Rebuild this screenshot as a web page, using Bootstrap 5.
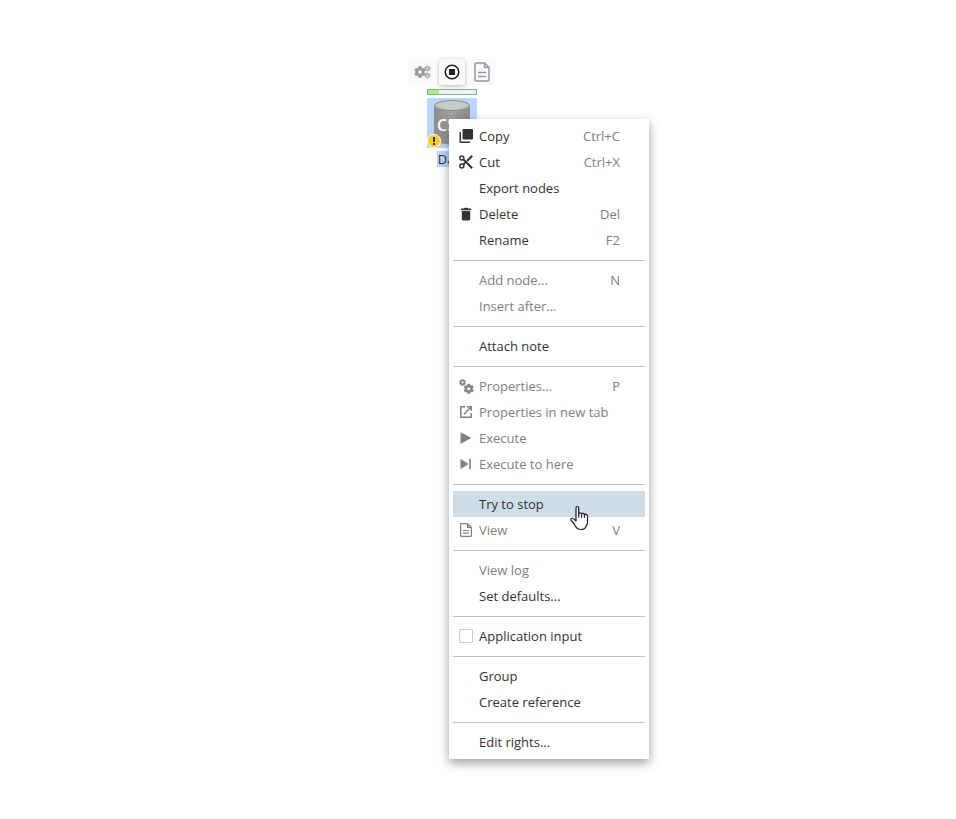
<!DOCTYPE html>
<html lang="en">
<head>
<meta charset="utf-8">
<meta name="viewport" content="width=device-width, initial-scale=1">
<title>Workflow canvas</title>
<link rel="stylesheet" href="https://cdn.jsdelivr.net/npm/bootstrap@5.3.0/dist/css/bootstrap.min.css">
<style>
body { font-family: "Open Sans", sans-serif; font-size: 13px; line-height: 16px; color: #333; background: #fff; }
/* free canvas: the node, the menu and the pointer have their own places */
.flow-node { left: 409px; top: 59px; }
.tool { width: 26px; height: 26px; background: #fafafe; color: #999; border-radius: 2px; }
.tool.on { color: #222; background: #f8f8fd; box-shadow: 0 1px 4px rgba(0,0,0,.32); }
.run-bar { width: 50px; height: 6px; margin-top: 4px; border: 1px solid #76b98a; border-radius: 0; background: #eef2f6; }
.run-bar .progress-bar { background: #b4ea84; }
.node-art { width: 50px; height: 50px; margin-top: 3px; background: #bad6ff; }
.node-warn { left: 0; bottom: 0; }
.node-label { margin-top: 3px; padding: 0 1px; background: #bad6ff; }
.ctx-menu { left: 449px; top: 119px; width: 200px; padding: 4px; background: #fff; box-shadow: 0 4px 10px rgba(0,0,0,.38); }
.ctx-item { height: 26px; padding: 0 25px 0 6px; color: #333; background: none; text-align: left; }
.ctx-item:disabled { color: #808080; }
.ctx-item.hover { background: #cfdde9; }
.ctx-item kbd { font: inherit; color: #808080; background: none; padding: 0; }
.slot { width: 14px; height: 14px; margin-right: 6px; }
.ctx-item .form-check-input { border: 1px solid #ccc; border-radius: 1px; margin: 0 6px 0 0; width: 14px; height: 14px; }
.ctx-rule { margin: 7px 0 6px; border-top: 1px solid #c4c4c4; opacity: 1; }
.pointer { left: 570px; top: 505px; pointer-events: none; }
svg { display: block; flex: none; }
</style>
<script src="https://cdn.jsdelivr.net/npm/bootstrap@5.3.0/dist/js/bootstrap.bundle.min.js"></script>
</head>
<body>
<svg width="0" height="0" class="position-absolute" aria-hidden="true">
  <symbol id="gear" viewBox="1.500 1.500 21 21"><path fill="currentColor" stroke="currentColor" stroke-width="1" d="M19.14 12.94c.04-.3.06-.61.06-.94 0-.32-.02-.64-.07-.94l2.03-1.58c.18-.14.23-.41.12-.61l-1.92-3.32c-.12-.22-.37-.29-.59-.22l-2.39.96c-.5-.38-1.03-.7-1.62-.94l-.36-2.54c-.04-.24-.24-.41-.48-.41h-3.84c-.24 0-.43.17-.47.41l-.36 2.54c-.59.24-1.13.57-1.62.94l-2.39-.96c-.22-.08-.47 0-.59.22L2.74 8.87c-.12.21-.08.47.12.61l2.03 1.58c-.05.3-.09.63-.09.94s.02.64.07.94l-2.03 1.58c-.18.14-.23.41-.12.61l1.92 3.32c.12.22.37.29.59.22l2.39-.96c.5.38 1.03.7 1.62.94l.36 2.54c.05.24.24.41.48.41h3.84c.24 0 .44-.17.47-.41l.36-2.54c.59-.24 1.13-.56 1.62-.94l2.39.96c.22.08.47 0 .59-.22l1.92-3.32c.12-.22.07-.47-.12-.61l-2.01-1.58zM12 15.6c-1.98 0-3.6-1.62-3.6-3.6s1.62-3.6 3.6-3.6 3.6 1.62 3.6 3.6-1.62 3.6-3.6 3.6z"/></symbol>
  <symbol id="doc" viewBox="0 0 16 20"><path fill="none" stroke="currentColor" stroke-width="1.500" stroke-linejoin="round" d="M1 2.200Q1 1 2.200 1H10.500L15 5.500V17.800Q15 19 13.800 19H2.200Q1 19 1 17.800ZM10.500 1V5.500H15M4 10.500H12M4 14.500H12"/></symbol>
</svg>

<main class="position-relative min-vh-100 overflow-hidden">
  <section class="flow-node position-absolute d-flex flex-column align-items-center" aria-label="Data node">
    <div class="d-flex gap-1">
      <button type="button" class="tool btn border-0 p-0 d-flex align-items-center justify-content-center" aria-label="Properties">
        <svg width="18" height="18" viewBox="0 0 18 18"><use href="#gear" x="1" y="3" width="12" height="12"/><g fill="none" stroke="currentColor"><circle cx="14.500" cy="5.500" r="1.700" stroke-width="1.300"/><circle cx="14.500" cy="12.500" r="1.700" stroke-width="1.300"/><circle cx="14.500" cy="5.500" r="2.600" stroke-width=".9" stroke-dasharray="1.300 1.420"/><circle cx="14.500" cy="12.500" r="2.600" stroke-width=".9" stroke-dasharray="1.300 1.420"/></g></svg>
      </button>
      <button type="button" class="tool on btn border-0 p-0 d-flex align-items-center justify-content-center" aria-label="Stop">
        <svg width="16" height="16" viewBox="0 0 16 16"><circle cx="8" cy="8" r="6.800" fill="none" stroke="currentColor" stroke-width="1.500"/><path fill="currentColor" d="M5 5h6v6H5z"/></svg>
      </button>
      <button type="button" class="tool btn border-0 p-0 d-flex align-items-center justify-content-center" aria-label="View"><svg width="16" height="20"><use href="#doc"/></svg></button>
    </div>
    <div class="run-bar progress" role="progressbar" aria-label="Execution" aria-valuenow="22" aria-valuemin="0" aria-valuemax="100"><div class="progress-bar" style="width:22%"></div></div>
    <div class="node-art position-relative">
      <svg width="50" height="50" viewBox="0 0 50 50"><defs><linearGradient id="side"><stop offset="0" stop-color="#8c8c8c"/><stop offset=".5" stop-color="#a0a0a0"/><stop offset="1" stop-color="#8c8c8c"/></linearGradient></defs>
        <path fill="url(#side)" d="M7 7v34c0 3 8 5.500 18 5.500S43 44 43 41V7z"/><ellipse cx="25" cy="7.500" rx="17.500" ry="5" fill="#c8c8c8" stroke="#8c8c8c"/>
        <text x="10" y="33" font-size="16" font-weight="600" fill="#fff">CSV</text></svg>
      <svg class="node-warn position-absolute" width="14" height="14" viewBox="0 0 14 14"><circle cx="7" cy="7" r="6.500" fill="#fc1" stroke="#fff"/><path fill="#333" d="M6 3h2v5H6zM6 9h2v2H6z"/></svg>
    </div>
    <div class="node-label">Data</div>
  </section>

  <div class="ctx-menu position-absolute d-flex flex-column" role="menu">
    <button type="button" class="ctx-item border-0 d-flex align-items-center"><svg class="slot" viewBox="0 0 14 14"><path fill="currentColor" d="M4.500 0h8.500q1 0 1 1v8.500q0 1-1 1H4.500q-1 0-1-1V1q0-1 1-1zM.5 3H2v9.500h9V14H1.500q-1 0-1-1z"/></svg><span>Copy</span><kbd class="ms-auto">Ctrl+C</kbd></button>
    <button type="button" class="ctx-item border-0 d-flex align-items-center"><svg class="slot" viewBox="0 0 14 14"><g fill="none" stroke="currentColor"><circle cx="2.800" cy="2.900" r="2" stroke-width="1.500"/><circle cx="2.800" cy="11.100" r="2" stroke-width="1.500"/><path stroke-width="2" d="M4.200 4.300 13.200 13.300M4.200 9.700 6.500 7.400M8 6l5.200-5.200"/></g></svg><span>Cut</span><kbd class="ms-auto">Ctrl+X</kbd></button>
    <button type="button" class="ctx-item border-0 d-flex align-items-center"><span class="slot"></span><span>Export nodes</span></button>
    <button type="button" class="ctx-item border-0 d-flex align-items-center"><svg class="slot" viewBox="0 0 14 14"><path fill="currentColor" d="M2 1.500h3l.7-.7h2.600l.7.700h3V3H2zM2.800 3.700h8.400v8.300q0 1.500-1.500 1.500H4.300q-1.500 0-1.500-1.500z"/></svg><span>Delete</span><kbd class="ms-auto">Del</kbd></button>
    <button type="button" class="ctx-item border-0 d-flex align-items-center"><span class="slot"></span><span>Rename</span><kbd class="ms-auto">F2</kbd></button>
    <hr class="ctx-rule">
    <button type="button" disabled class="ctx-item border-0 d-flex align-items-center"><span class="slot"></span><span>Add node...</span><kbd class="ms-auto">N</kbd></button>
    <button type="button" disabled class="ctx-item border-0 d-flex align-items-center"><span class="slot"></span><span>Insert after...</span></button>
    <hr class="ctx-rule">
    <button type="button" class="ctx-item border-0 d-flex align-items-center"><span class="slot"></span><span>Attach note</span></button>
    <hr class="ctx-rule">
    <button type="button" disabled class="ctx-item border-0 d-flex align-items-center"><svg class="slot overflow-visible" viewBox="0 0 14 14"><use href="#gear" x="0" y="0" width="7" height="7"/><use href="#gear" x="4.500" y="4.500" width="10.500" height="10.500"/></svg><span>Properties...</span><kbd class="ms-auto">P</kbd></button>
    <button type="button" disabled class="ctx-item border-0 d-flex align-items-center"><svg class="slot" viewBox="0 0 14 14"><path fill="none" stroke="currentColor" stroke-width="1.500" d="M6 1.800H1.800v10.400h10.400V8M8 1.800h4.200V6M12 2 4.800 9.200"/></svg><span class="text-nowrap">Properties in new tab</span></button>
    <button type="button" disabled class="ctx-item border-0 d-flex align-items-center"><svg class="slot" viewBox="0 0 14 14"><path fill="currentColor" d="M1.500 1.200 12.500 7 1.500 12.800z"/></svg><span>Execute</span></button>
    <button type="button" disabled class="ctx-item border-0 d-flex align-items-center"><svg class="slot" viewBox="0 0 14 14"><path fill="currentColor" d="M1.500 1.800 9.500 7 1.500 12.200zM10.200 1.500h1.600v11h-1.600z"/></svg><span>Execute to here</span></button>
    <hr class="ctx-rule">
    <button type="button" class="ctx-item hover border-0 d-flex align-items-center"><span class="slot"></span><span>Try to stop</span></button>
    <button type="button" disabled class="ctx-item border-0 d-flex align-items-center"><svg class="slot" viewBox="0 0 14 14"><path fill="none" stroke="currentColor" stroke-width="1.200" stroke-linejoin="round" d="M1.600 1.600q0-1 1-1H8.600L12.400 4.400v8q0 1-1 1H2.600q-1 0-1-1zM8.600.6V4.400h3.800M4 7.500h6M4 10.200h6"/></svg><span>View</span><kbd class="ms-auto">V</kbd></button>
    <hr class="ctx-rule">
    <button type="button" disabled class="ctx-item border-0 d-flex align-items-center"><span class="slot"></span><span>View log</span></button>
    <button type="button" class="ctx-item border-0 d-flex align-items-center"><span class="slot"></span><span>Set defaults...</span></button>
    <hr class="ctx-rule">
    <div class="ctx-item d-flex align-items-center"><input class="form-check-input" type="checkbox" id="app-input"><label for="app-input">Application input</label></div>
    <hr class="ctx-rule">
    <button type="button" class="ctx-item border-0 d-flex align-items-center"><span class="slot"></span><span>Group</span></button>
    <button type="button" class="ctx-item border-0 d-flex align-items-center"><span class="slot"></span><span>Create reference</span></button>
    <hr class="ctx-rule">
    <button type="button" class="ctx-item border-0 d-flex align-items-center"><span class="slot"></span><span>Edit rights...</span></button>
  </div>

  <svg class="pointer position-absolute" width="19" height="26" viewBox="0 0 19 26" aria-hidden="true"><path fill="#fff" stroke="#1c1c30" stroke-width="1.200" stroke-linejoin="round" d="M6 16V3q0-1.500 1.300-1.500T8.700 3v6q.1-1.200 1.400-1.100t1.500 1.300q.2-1 1.400-.9t1.500 1.500q.3-.8 1.600-.5t1.400 1.700v6q0 3-1.500 4.500-1.200 3-5 3Q7 24.500 5 20.500Q4 18 1.200 15.500Q.2 13.800 1.800 13.300T6 16z"/><path fill="none" stroke="#1c1c30" stroke-width="1.200" d="M8.700 9v3.500M11.600 9.200v3.500M14.500 9.800v3"/></svg>
</main>
</body>
</html>
